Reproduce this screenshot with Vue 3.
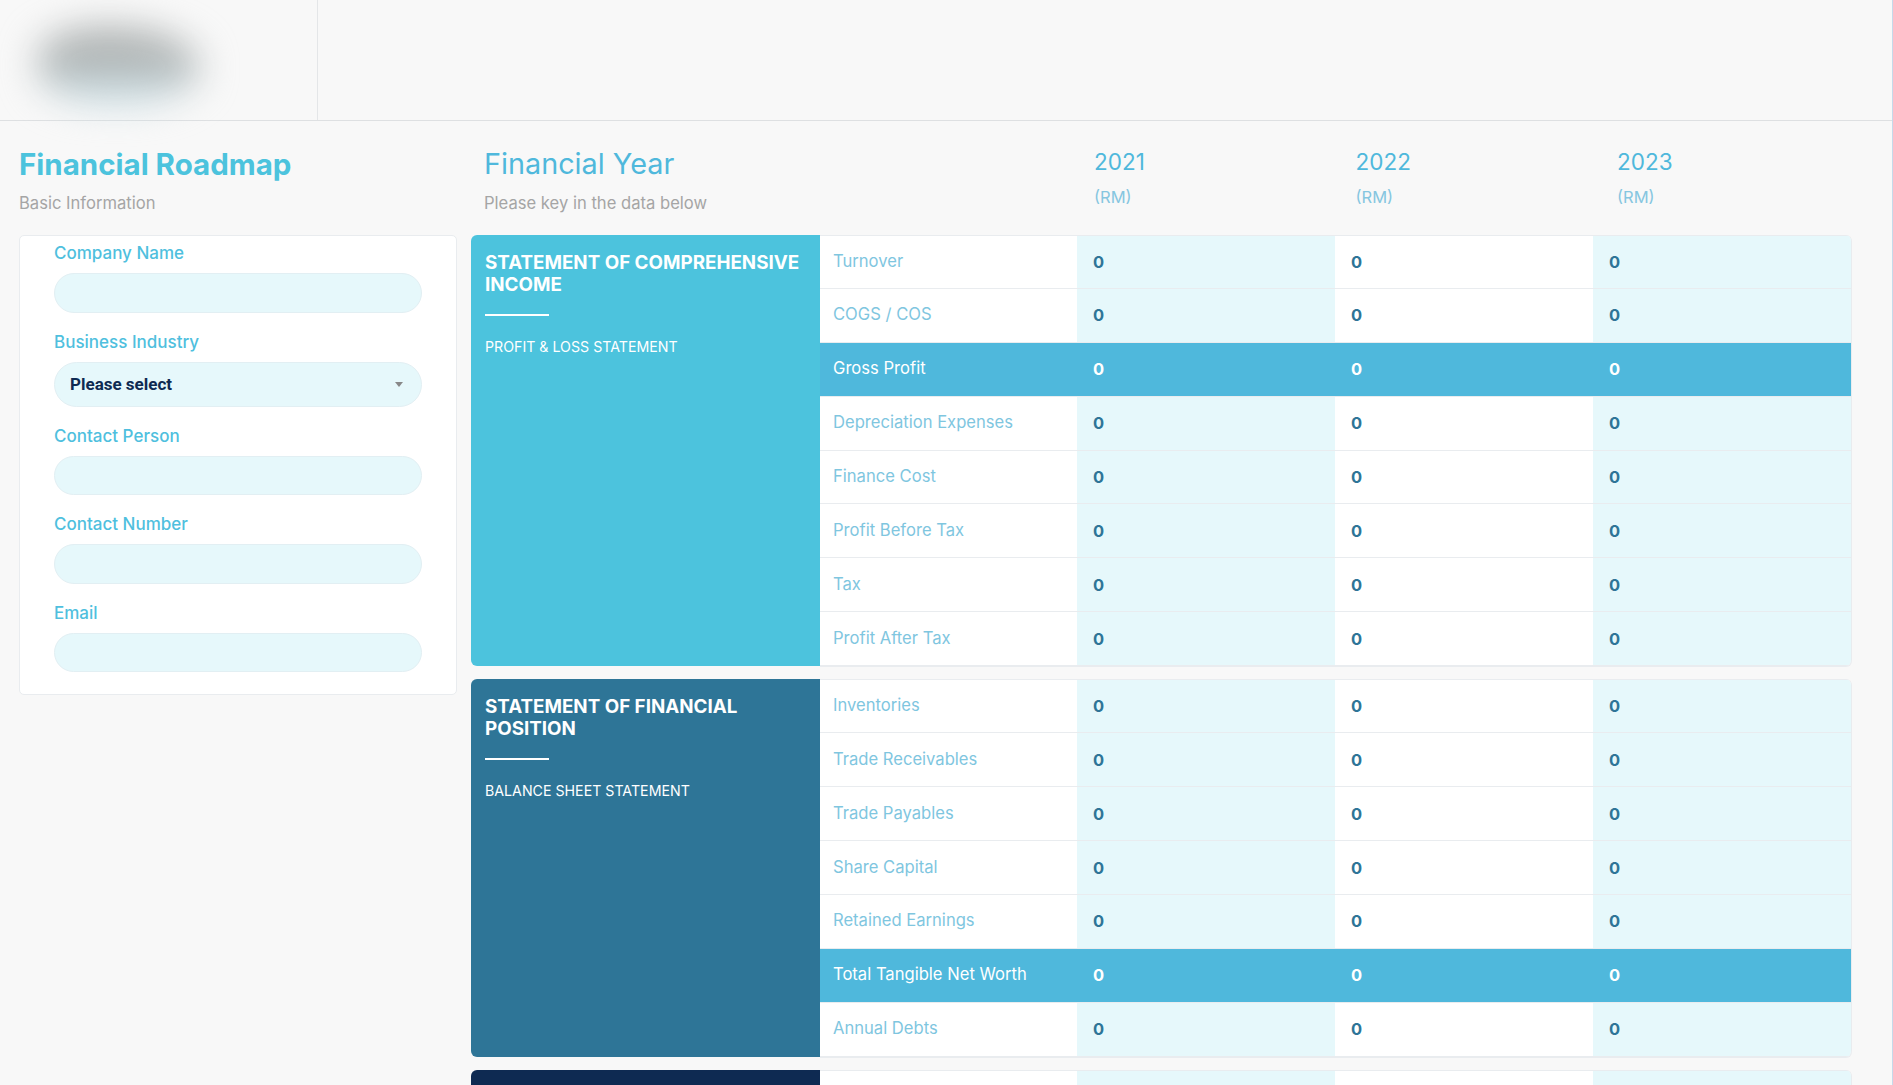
<script setup>
const fields = [
  { label: 'Company Name', type: 'input' },
  { label: 'Business Industry', type: 'select' },
  { label: 'Contact Person', type: 'input' },
  { label: 'Contact Number', type: 'input' },
  { label: 'Email', type: 'input' },
];

const years = ['2021', '2022', '2023'];

const groups = [
  {
    title: 'STATEMENT OF COMPREHENSIVE INCOME',
    sub: 'PROFIT & LOSS STATEMENT',
    tone: 'light',
    rows: [
      { label: 'Turnover' },
      { label: 'COGS / COS' },
      { label: 'Gross Profit', total: true },
      { label: 'Depreciation Expenses' },
      { label: 'Finance Cost' },
      { label: 'Profit Before Tax' },
      { label: 'Tax' },
      { label: 'Profit After Tax' },
    ],
  },
  {
    title: 'STATEMENT OF FINANCIAL POSITION',
    sub: 'BALANCE SHEET STATEMENT',
    tone: 'mid',
    rows: [
      { label: 'Inventories' },
      { label: 'Trade Receivables' },
      { label: 'Trade Payables' },
      { label: 'Share Capital' },
      { label: 'Retained Earnings' },
      { label: 'Total Tangible Net Worth', total: true },
      { label: 'Annual Debts' },
    ],
  },
  {
    title: '',
    sub: '',
    tone: 'dark',
    rows: [{ label: '', blank: true }],
  },
];
</script>

<template>
  <div class="page">
    <header class="topbar">
      <div class="topbar__logo">
        <div class="logo-blur"></div>
      </div>
    </header>

    <main class="content">
      <aside class="side">
        <div class="side__head">
          <h1 class="side__title">Financial Roadmap</h1>
          <p class="muted">Basic Information</p>
        </div>
        <form class="card">
          <div v-for="f in fields" :key="f.label" class="field">
            <label class="field__label">{{ f.label }}</label>
            <div v-if="f.type === 'select'" class="select">
              <span>Please select</span>
              <i class="select__caret"></i>
            </div>
            <input v-else class="field__input" type="text" />
          </div>
        </form>
      </aside>

      <section class="sheet">
        <div class="sheet__head">
          <div>
            <h2 class="sheet__title">Financial Year</h2>
            <p class="muted">Please key in the data below</p>
          </div>
          <div v-for="y in years" :key="y" class="year">
            <div class="year__num">{{ y }}</div>
            <div class="year__unit">(RM)</div>
          </div>
        </div>

        <div v-for="(g, i) in groups" :key="i" class="group">
          <div class="panel" :class="`panel--${g.tone}`">
            <template v-if="g.title">
              <h3 class="panel__title">{{ g.title }}</h3>
              <div class="panel__rule"></div>
              <p class="panel__sub">{{ g.sub }}</p>
            </template>
          </div>
          <div class="table">
            <div
              v-for="(r, j) in g.rows"
              :key="j"
              class="row"
              :class="{ 'row--total': r.total }"
            >
              <div class="cell cell--label">{{ r.label }}</div>
              <div v-for="y in years" :key="y" class="cell cell--num">
                {{ r.blank ? '' : '0' }}
              </div>
            </div>
          </div>
        </div>
      </section>
    </main>
  </div>
</template>

<style>
html,
body {
  margin: 0;
  background: #f8f8f8;
}
</style>

<style scoped>
.page {
  height: 1085px;
  overflow: hidden;
  background: #f8f8f8;
  font-family: Inter, 'Open Sans', sans-serif;
  border-right: 1px solid #c6d9ea;
}
.topbar {
  height: 120px;
  border-bottom: 1px solid #dee0e2;
  display: flex;
}
.topbar__logo {
  width: 317px;
  border-right: 1px solid #e4e6e8;
  position: relative;
}
.logo-blur {
  position: absolute;
  left: 38px;
  top: 28px;
  width: 162px;
  height: 76px;
  border-radius: 40% 55% 50% 45%;
  background: linear-gradient(180deg, #a6aaaa 0%, #b6bbbb 48%, #cfe6ee 100%);
  filter: blur(18px);
}

.content {
  display: flex;
  padding-left: 19px;
}
.side {
  width: 438px;
  flex-shrink: 0;
}
.side__head {
  height: 114px;
  box-sizing: border-box;
  padding-top: 25px;
}
.side__title {
  margin: 0;
  font-size: 29.5px;
  line-height: 36px;
  font-weight: 700;
  color: #4cc3dd;
}
.muted {
  margin: 10px 0 0;
  font-size: 16.6px;
  line-height: 22px;
  color: #a5a5a5;
}

.card {
  box-sizing: border-box;
  height: 460px;
  background: #fff;
  border: 1px solid #e9ecef;
  border-radius: 5px;
  padding: 5px 34px 0;
}
.field {
  margin-bottom: 17px;
}
.field__label {
  display: block;
  font-size: 17px;
  line-height: 24px;
  font-weight: 500;
  color: #4fbfde;
  margin-bottom: 8px;
}
.field__input {
  display: block;
  box-sizing: border-box;
  width: 100%;
  height: 39.5px;
  padding: 0 16px;
  background: #e6f8fb;
  border: 1px solid #e2eff3;
  border-radius: 20px;
  outline: none;
}
.select {
  box-sizing: border-box;
  height: 45px;
  display: flex;
  align-items: center;
  justify-content: space-between;
  padding: 0 18px 0 15px;
  background: #e6f8fb;
  border: 1px solid #e2eff3;
  border-radius: 23px;
  font-family: Roboto, sans-serif;
  font-size: 17px;
  font-weight: 700;
  color: #0e2a52;
}
.select__caret {
  width: 0;
  height: 0;
  border-left: 4px solid transparent;
  border-right: 4px solid transparent;
  border-top: 5px solid #888;
}

.sheet {
  margin-left: 14px;
  width: 1381px;
  flex-shrink: 0;
}
.sheet__head {
  height: 114px;
  box-sizing: border-box;
  padding: 25px 0 0 13px;
  display: grid;
  grid-template-columns: 610px repeat(3, 261.5px);
}
.sheet__title {
  margin: 0;
  font-size: 28.8px;
  line-height: 36px;
  font-weight: 400;
  color: #4fb8dc;
}
.year__num {
  font-size: 22.5px;
  line-height: 32px;
  color: #4fb8dc;
}
.year__unit {
  margin-top: 8px;
  font-size: 16.5px;
  line-height: 22px;
  color: #86c6e0;
}

.group {
  display: flex;
  margin-bottom: 13.3px;
}
.panel {
  width: 349px;
  flex-shrink: 0;
  box-sizing: border-box;
  padding: 17px 14px;
  border-radius: 6px 0 0 6px;
  color: #fff;
}
.panel--light {
  background: #4cc3dd;
}
.panel--mid {
  background: #2e7597;
}
.panel--dark {
  background: #0e2a52;
}
.panel__title {
  margin: 0;
  font-size: 18.8px;
  line-height: 21.5px;
  font-weight: 700;
}
.panel__rule {
  width: 64px;
  height: 2px;
  margin: 19px 0 22px;
  background: #fff;
}
.panel__sub {
  margin: 0;
  font-size: 14.2px;
  line-height: 18px;
}

.table {
  flex: 1;
  border-right: 1px solid #e9ecef;
  border-radius: 0 6px 6px 0;
  box-shadow: 0 1px 0 #e9ecef;
  overflow: hidden;
}
.row {
  display: grid;
  grid-template-columns: 257px 258px 258px 258px;
  height: 53.9px;
  box-sizing: border-box;
  border-bottom: 1px solid #e9ecef;
}
.row:first-child {
  border-top: 1px solid #e9ecef;
}
.cell {
  display: flex;
  align-items: center;
  padding-left: 16px;
  background: #fff;
}
.cell--label {
  padding-left: 13px;
  padding-bottom: 2px;
  font-size: 16.6px;
  color: #7fc6df;
}
.cell--num {
  font-size: 16.5px;
  font-weight: 700;
  color: #2e7597;
}
.cell--num:nth-child(even) {
  background: #e6f8fb;
}
.row--total .cell {
  background: #4fb8dc;
  color: #fff;
}
</style>
